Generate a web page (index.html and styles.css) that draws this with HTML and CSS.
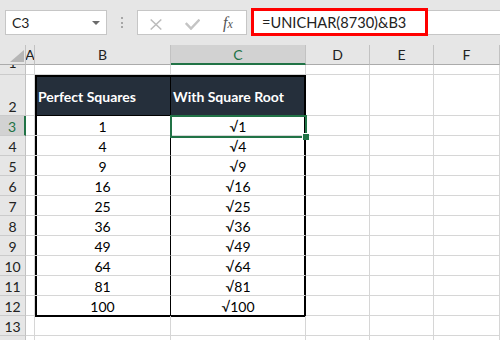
FILE: index.html
```html
<!DOCTYPE html>
<html>
<head>
<meta charset="utf-8">
<link rel="stylesheet" href="styles.css">
</head>
<body>
<div class="toolbar">
  <div class="namebox"><span class="ref">C3</span><span class="caret"></span></div>
  <div class="grip"><i></i><i></i><i></i></div>
  <div class="fxbtns">
    <svg class="ic" width="12" height="11" viewBox="0 0 12 11"><path d="M0.7 0.5 L11.3 10.5 M11.3 0.5 L0.7 10.5" stroke="#bcbcbc" stroke-width="1.5" fill="none"/></svg>
    <svg class="ic" width="15" height="11" viewBox="0 0 15 11"><path d="M0.8 4 L6 9.6 L14.5 0.6" stroke="#c4c4c4" stroke-width="2.4" fill="none"/></svg>
    <span class="fx">f<span class="fxx">x</span></span>
  </div>
  <div class="formula"><div class="hl">=UNICHAR(8730)&amp;B3</div></div>
</div>
<div class="sheet">
  <div class="c h corner"><span class="tri"></span></div>
  <div class="c h">A</div>
  <div class="c h">B</div>
  <div class="c h hsel">C</div>
  <div class="c h">D</div>
  <div class="c h">E</div>
  <div class="c h">F</div>

  <div class="c rh r1">1</div><div class="c"></div><div class="c"></div><div class="c"></div><div class="c"></div><div class="c"></div><div class="c"></div>

  <div class="c rh">2</div><div class="c"></div><div class="c b top dk dkb">Perfect Squares</div><div class="c t top dk dkc">With Square Root</div><div class="c"></div><div class="c"></div><div class="c"></div>

  <div class="c rh rsel">3</div><div class="c"></div><div class="c b">1</div><div class="c t sc">√1<span class="selbox"><span class="handle"></span></span></div><div class="c"></div><div class="c"></div><div class="c"></div>

  <div class="c rh">4</div><div class="c"></div><div class="c b">4</div><div class="c t">√4</div><div class="c"></div><div class="c"></div><div class="c"></div>

  <div class="c rh">5</div><div class="c"></div><div class="c b">9</div><div class="c t">√9</div><div class="c"></div><div class="c"></div><div class="c"></div>

  <div class="c rh">6</div><div class="c"></div><div class="c b">16</div><div class="c t">√16</div><div class="c"></div><div class="c"></div><div class="c"></div>

  <div class="c rh">7</div><div class="c"></div><div class="c b">25</div><div class="c t">√25</div><div class="c"></div><div class="c"></div><div class="c"></div>

  <div class="c rh">8</div><div class="c"></div><div class="c b">36</div><div class="c t">√36</div><div class="c"></div><div class="c"></div><div class="c"></div>

  <div class="c rh">9</div><div class="c"></div><div class="c b">49</div><div class="c t">√49</div><div class="c"></div><div class="c"></div><div class="c"></div>

  <div class="c rh">10</div><div class="c"></div><div class="c b">64</div><div class="c t">√64</div><div class="c"></div><div class="c"></div><div class="c"></div>

  <div class="c rh">11</div><div class="c"></div><div class="c b">81</div><div class="c t">√81</div><div class="c"></div><div class="c"></div><div class="c"></div>

  <div class="c rh">12</div><div class="c"></div><div class="c b end">100</div><div class="c t end">√100</div><div class="c"></div><div class="c"></div><div class="c"></div>

  <div class="c rh">13</div><div class="c"></div><div class="c under"></div><div class="c under"></div><div class="c"></div><div class="c"></div><div class="c"></div>

  <div class="c rh"></div><div class="c"></div><div class="c"></div><div class="c"></div><div class="c"></div><div class="c"></div><div class="c"></div>
</div>
</body>
</html>
```
FILE: styles.css
```css
* { box-sizing: border-box; margin: 0; padding: 0; }
html, body { width: 500px; height: 340px; overflow: hidden; }
body { background: #e6e6e6; font-family: Lato, "Liberation Sans", sans-serif; color: #000; }

.toolbar { height: 45px; display: flex; align-items: flex-start; padding-top: 10px; }
.namebox { margin-left: 5px; width: 102px; height: 25px; background: #fff; border: 1px solid #c6c6c6; display: flex; align-items: center; padding: 0 6px; font-size: 14px; color: #222; }
.ref { flex: 1; }
.caret { width: 0; height: 0; border-left: 4px solid transparent; border-right: 4px solid transparent; border-top: 4px solid #6b6b6b; }
.grip { margin-left: 14px; width: 2px; height: 25px; display: flex; flex-direction: column; justify-content: center; gap: 2.5px; }
.grip i { display: block; width: 2px; height: 2px; background: #a6a6a6; }
.fxbtns { margin-left: 14px; width: 110px; height: 25px; background: #fff; border: 1px solid #c6c6c6; display: flex; align-items: center; padding: 3px 0 0 12px; gap: 23px; }
.ic { display: block; }
.fx { font-family: "Liberation Serif", serif; font-style: italic; font-size: 16px; color: #555; margin-top: -2px; }
.fxx { font-size: 12px; }
.formula { margin-left: 4px; flex: 1; height: 25px; background: #fff; border-top: 1px solid #c6c6c6; border-bottom: 1px solid #c6c6c6; }
.hl { width: 177px; height: 28px; margin-top: -3px; border: 3px solid #ff0000; display: flex; align-items: center; padding-left: 8px; font-size: 14.6px; color: #222; }

.sheet { display: grid; grid-template-columns: 26px 9px 136px 135px 64px 64px 66px; grid-template-rows: 20px 10px 41px repeat(12, 20px); background: #fff; }
.c { border-right: 1px solid #d6d6d6; border-bottom: 1px solid #d6d6d6; display: flex; align-items: flex-end; justify-content: center; font-size: 14px; line-height: 17px; overflow: hidden; white-space: nowrap; }
.h { background: #e6e6e6; border-right-color: #c2c2c2; border-bottom-color: #ababab; align-items: center; color: #222; }
.rh { background: #e6e6e6; border-right-color: #c2c2c2; border-bottom-color: #cbcbcb; color: #222; }
.r1 { line-height: 22px; }
.hsel { background: #d2d2d2; color: #217346; border-bottom: 2px solid #217346; }
.rsel { background: #d2d2d2; color: #217346; border-right: 2px solid #217346; }
.corner { align-items: flex-end; justify-content: flex-end; padding: 0 1px 2px 0; }
.tri { width: 0; height: 0; border-left: 14px solid transparent; border-bottom: 12px solid #b6b6b6; }

.b { border-right-color: #000; box-shadow: inset 2px 0 0 #000; }
.t { border-right-color: #000; box-shadow: inset -1px 0 0 #000; }
.b.top { box-shadow: inset 2px 0 0 #000, inset 0 2px 0 #000; border-bottom-color: #000; }
.t.top { box-shadow: inset -1px 0 0 #000, inset 0 2px 0 #000; border-bottom-color: #000; }
.end { border-bottom-color: #000; }
.under { box-shadow: inset 0 1px 0 #000; }
.dk { background: #252f3b; color: #fff; font-weight: 700; align-items: center; justify-content: flex-start; padding-top: 2px; }
.dkb { padding-left: 3px; }
.dkc { padding-left: 2px; }

.sc { position: relative; overflow: visible; }
.selbox { position: absolute; top: -1px; left: -1px; right: -2px; bottom: -3px; border: 2px solid #217346; z-index: 2; }
.handle { position: absolute; right: -4px; bottom: -4px; width: 6px; height: 6px; background: #217346; box-shadow: -1px -1px 0 #fff; }
```
